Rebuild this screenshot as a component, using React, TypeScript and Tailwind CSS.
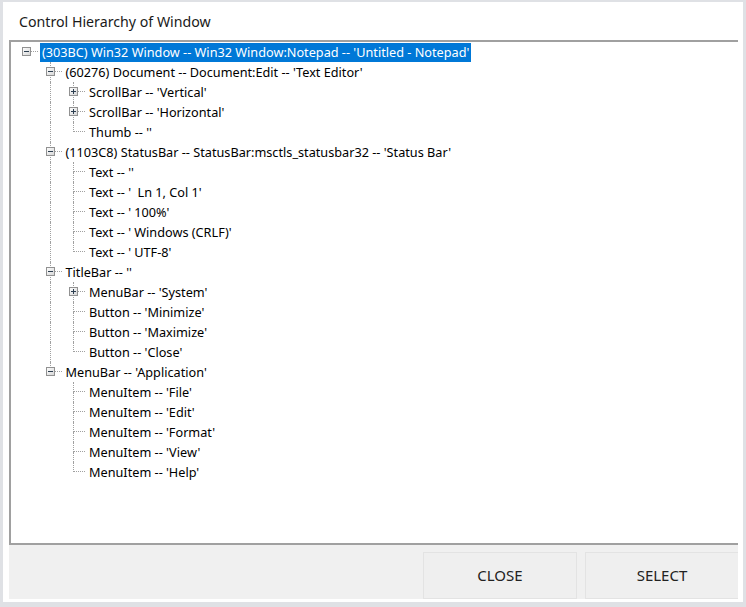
import React from 'react';

type TNode = { text: string; box?: 'plus' | 'minus'; selected?: boolean; children?: TNode[] };

const tree: TNode = {
  text: "(303BC) Win32 Window -- Win32 Window:Notepad -- 'Untitled - Notepad'",
  box: 'minus',
  selected: true,
  children: [
    {
      text: "(60276) Document -- Document:Edit -- 'Text Editor'",
      box: 'minus',
      children: [
        { text: "ScrollBar -- 'Vertical'", box: 'plus' },
        { text: "ScrollBar -- 'Horizontal'", box: 'plus' },
        { text: "Thumb -- ''" },
      ],
    },
    {
      text: "(1103C8) StatusBar -- StatusBar:msctls_statusbar32 -- 'Status Bar'",
      box: 'minus',
      children: [
        { text: "Text -- ''" },
        { text: "Text -- '  Ln 1, Col 1'" },
        { text: "Text -- ' 100%'" },
        { text: "Text -- ' Windows (CRLF)'" },
        { text: "Text -- ' UTF-8'" },
      ],
    },
    {
      text: "TitleBar -- ''",
      box: 'minus',
      children: [
        { text: "MenuBar -- 'System'", box: 'plus' },
        { text: "Button -- 'Minimize'" },
        { text: "Button -- 'Maximize'" },
        { text: "Button -- 'Close'" },
      ],
    },
    {
      text: "MenuBar -- 'Application'",
      box: 'minus',
      children: [
        { text: "MenuItem -- 'File'" },
        { text: "MenuItem -- 'Edit'" },
        { text: "MenuItem -- 'Format'" },
        { text: "MenuItem -- 'View'" },
        { text: "MenuItem -- 'Help'" },
      ],
    },
  ],
};

type Row = { node: TNode; level: number; last: boolean; guides: boolean[] };

function flatten(node: TNode, level: number, last: boolean, guides: boolean[], out: Row[]) {
  out.push({ node, level, last, guides });
  const kids = node.children || [];
  kids.forEach((k, i) => flatten(k, level + 1, i === kids.length - 1, [...guides, level > 0 && !last], out));
  return out;
}

const rows = flatten(tree, 0, true, [], []);

const ExpandBox = ({ kind }: { kind: 'plus' | 'minus' }) => (
  <svg width="9" height="9" viewBox="0 0 9 9" className="absolute left-[11px] top-[5px]">
    <defs>
      <linearGradient id={`g-${kind}`} x1="0" y1="0" x2="1" y2="1">
        <stop offset="0" stopColor="#ffffff" />
        <stop offset="1" stopColor="#d4d4d4" />
      </linearGradient>
    </defs>
    <rect x="0.5" y="0.5" width="8" height="8" fill={`url(#g-${kind})`} stroke="#919191" />
    <rect x="2" y="4" width="5" height="1" fill="#2c3e50" />
    {kind === 'plus' && <rect x="4" y="2" width="1" height="5" fill="#2c3e50" />}
  </svg>
);

const TreeRow = ({ row }: { row: Row }) => {
  const { node, level, last, guides } = row;
  return (
    <div className="flex h-5 items-center">
      {guides.map((g, i) => (
        <div key={i} className="relative h-full w-[23.5px] shrink-0">
          {g && <span className="absolute left-[15px] top-0 h-full border-l border-dotted border-[#a0a0a0]" />}
        </div>
      ))}
      <div className="relative h-full w-[29px] shrink-0">
        {level > 0 && <span className="absolute left-[15px] top-0 h-[10px] border-l border-dotted border-[#a0a0a0]" />}
        {level > 0 && !last && (
          <span className="absolute left-[15px] top-[10px] h-[10px] border-l border-dotted border-[#a0a0a0]" />
        )}
        <span className="absolute left-[16px] top-[9px] w-[11px] border-t border-dotted border-[#a0a0a0]" />
        {node.box && <ExpandBox kind={node.box} />}
      </div>
      <span
        className={`whitespace-pre px-[2px] leading-[19px] ${
          node.selected ? 'bg-[#0078d7] text-white' : 'text-black'
        }`}
      >
        {node.text}
      </span>
    </div>
  );
};

export default function App() {
  return (
    <div
      className="h-[607px] w-[746px] bg-[#dfe1e5] pb-[5px] pl-[3px] pr-[3px] pt-[2px]"
      style={{ fontFamily: '"Noto Sans", "Open Sans", Arial, sans-serif' }}
    >
      <div className="flex h-full flex-col bg-white pb-[3px]">
        <div className="flex h-[38px] shrink-0 items-center pl-[16px] pt-px text-[14.2px] text-[#1a1a1a]">
          Control Hierarchy of Window
        </div>
        <div className="ml-[6px] mr-[5px] flex min-h-0 flex-1 flex-col">
          <div className="flex-1 overflow-hidden border-b-2 border-l-2 border-t-2 border-[#a0a0a0] bg-white text-[12.7px]">
            {rows.map((r, i) => (
              <TreeRow key={i} row={r} />
            ))}
          </div>
          <div className="flex h-[54px] shrink-0 items-end justify-end gap-2 overflow-hidden bg-[#f0f0f0]">
            <button className="flex h-[47px] w-[154px] items-center justify-center border border-[#e3e3e3] bg-[#efefef] text-[15px] text-[#222]">
              CLOSE
            </button>
            <button className="flex h-[47px] w-[153px] items-center justify-center border border-r-0 border-[#e3e3e3] bg-[#efefef] text-[15px] text-[#222]">
              SELECT
            </button>
          </div>
        </div>
      </div>
    </div>
  );
}
